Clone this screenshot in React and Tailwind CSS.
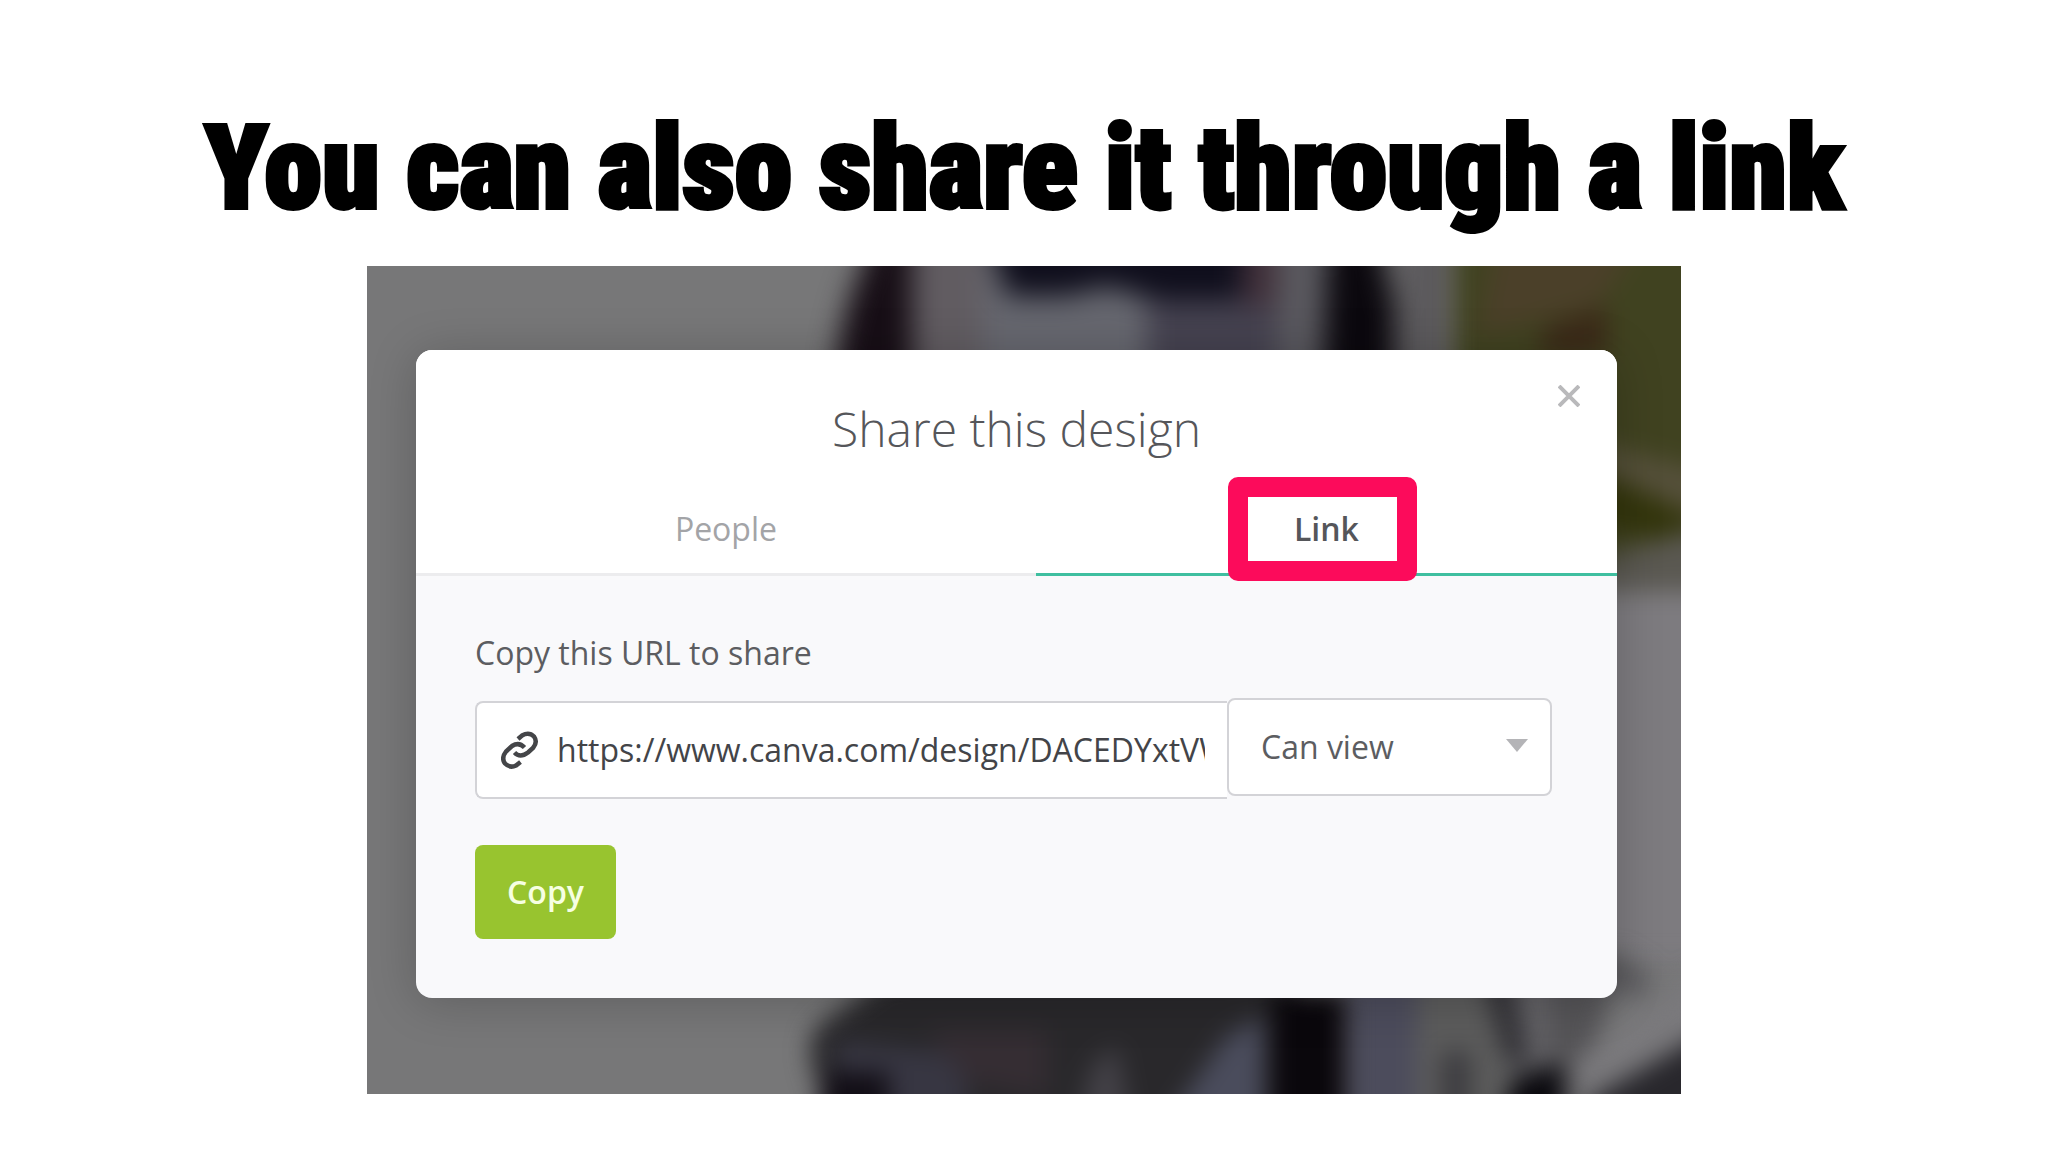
import { useRef, useState } from 'react';

const SHARE_URL = 'https://www.canva.com/design/DACEDYxtVW';

const TABS = [
  { id: 'people', label: 'People' },
  { id: 'link', label: 'Link' },
];

const PERMISSIONS = [
  { value: 'view', label: 'Can view' },
  { value: 'edit', label: 'Can edit' },
];

// Out of focus photo that sits behind the dialog
function Backdrop() {
  return (
    <svg
      className="absolute inset-0 h-full w-full"
      viewBox="0 0 1314 828"
      preserveAspectRatio="none"
      aria-hidden="true"
    >
      <defs>
        <filter id="soft" x="-30%" y="-30%" width="160%" height="160%" colorInterpolationFilters="sRGB">
          <feGaussianBlur stdDeviation="14" />
        </filter>
        <filter id="softer" x="-30%" y="-30%" width="160%" height="160%" colorInterpolationFilters="sRGB">
          <feGaussianBlur stdDeviation="12" />
        </filter>
      </defs>
      <rect width="1314" height="828" fill="#777778" />

      {/* top edge */}
      <g filter="url(#soft)">
        <path d="M500 -40H548V140H465Q470 50 500 -10Z" fill="#170e16" />
        <rect x="545" y="-40" width="75" height="180" fill="#615c61" />
        <rect x="615" y="-40" width="170" height="180" fill="#66676f" />
        <rect x="780" y="-40" width="130" height="180" fill="#454250" />
        <path d="M618 -40H875V34H790L740 20L700 30H640Z" fill="#0f0e1c" />
        <rect x="876" y="-40" width="40" height="80" fill="#41303a" />
        <rect x="910" y="-40" width="50" height="180" fill="#5a595f" />
        <path d="M962 -40H1010L1028 40V140H955Z" fill="#0b080e" />
        <rect x="1032" y="-40" width="54" height="180" fill="#5c5a5d" />
      </g>

      {/* foliage on the right */}
      <g filter="url(#softer)">
        <path d="M1086 -40H1380V318H1086Z" fill="#404220" />
        <path d="M1130 -30L1270 -20L1230 40L1110 70Z" fill="#4b4029" />
        <path d="M1180 60L1240 40V90H1170Z" fill="#3b2a18" />
        <path d="M1220 175L1340 205V255L1220 215Z" fill="#55503a" />
        <path d="M1220 200L1340 255V285L1220 255Z" fill="#33350c" />
        <path d="M1220 295L1340 260V350H1220Z" fill="#5a5851" />
        <rect x="1200" y="325" width="160" height="370" fill="#7d7b7f" />
      </g>

      {/* bottom edge */}
      <g filter="url(#softer)">
        <path d="M520 710H930V870H470L445 800Q438 765 462 752Z" fill="#29282b" />
        <path d="M470 775L600 790V850H470Z" fill="#373642" />
        <path d="M560 765H680V830L600 815Z" fill="#352d33" />
        <path d="M456 806H522V870H450Z" fill="#120e16" />
        <path d="M725 800L750 780L765 860H710Z" fill="#434147" />
        <path d="M860 770L897 750V870H790Z" fill="#4a4c5c" />
        <rect x="905" y="725" width="74" height="150" fill="#0a070c" />
        <rect x="982" y="700" width="68" height="180" fill="#4c4c5c" />
        <rect x="1050" y="700" width="90" height="180" fill="#5c5c5c" />
        <rect x="1074" y="785" width="30" height="90" fill="#3d3c40" />
        <path d="M1110 690H1142L1164 800H1140Z" fill="#323136" />
        <path d="M1150 690H1215L1200 820H1165Z" fill="#656468" />
        <path d="M1183 690H1260L1200 850H1180Z" fill="#555457" />
        <path d="M1144 812L1196 797V880H1135Z" fill="#09080d" />
        <path d="M1202 800L1340 700V780L1220 850Z" fill="#7a797c" />
        <path d="M1225 832L1350 760V890H1210Z" fill="#28272c" />
        <circle cx="1266" cy="715" r="16" fill="#5b5a5e" />
      </g>
    </svg>
  );
}

function ChainIcon() {
  return (
    <svg
      className="h-[38px] w-[38px] shrink-0"
      viewBox="0 0 38 38"
      fill="none"
      stroke="#444548"
      strokeWidth="4.5"
      aria-hidden="true"
    >
      <path d="M17 8L21 4.500Q28 0.500 33 5.500Q37 11 32 17L27 21.500Q19 27.500 13.500 21.500" />
      <path d="M23.500 16.500Q18 10.500 11 15L5 20.500Q0 27 4 32.500Q9 37.500 15 34.500L19.500 31" />
    </svg>
  );
}

export default function App() {
  const [tab, setTab] = useState('link');
  const [permission, setPermission] = useState('view');
  const [open, setOpen] = useState(true);
  const urlRef = useRef(null);

  const handleCopy = () => {
    urlRef.current?.select();
    navigator.clipboard?.writeText(SHARE_URL).catch(() => {});
  };

  return (
    <main className="flex min-h-screen flex-col items-center bg-white px-6 pt-[108px] pb-14 font-['Open_Sans',sans-serif]">
      <h1 className="mb-[38px] text-center font-['Roboto_Condensed',sans-serif] text-[116px] leading-[120px] font-black text-black [-webkit-text-stroke:4px_black]">
        You can also share it through a link
      </h1>

      <section className="relative w-full max-w-[1314px] overflow-hidden pt-[84px] pr-16 pb-24 pl-[49px]">
        <Backdrop />

        {open && (
          <div
            role="dialog"
            aria-labelledby="share-title"
            className="relative rounded-2xl bg-[#f9f9fb] shadow-[0_4px_48px_rgba(0,0,0,0.2)]"
          >
            {/* Header */}
            <div className="rounded-t-2xl bg-white pt-[47px]">
              <h2
                id="share-title"
                className="text-center text-[48px] leading-[64px] font-light text-[#55565a]"
              >
                Share this design
              </h2>
              <button
                type="button"
                aria-label="Close"
                onClick={() => setOpen(false)}
                className="absolute top-7 right-[30px] flex h-9 w-9 cursor-pointer items-center justify-center"
              >
                <svg className="h-[22px] w-[22px]" viewBox="0 0 22 22" stroke="#b9b9bb" strokeWidth="4" aria-hidden="true">
                  <path d="M1 1L21 21M21 1L1 21" />
                </svg>
              </button>

              <div role="tablist" className="mt-[19px] grid grid-cols-[16fr_15fr]">
                {TABS.map((t) => (
                  <button
                    key={t.id}
                    type="button"
                    role="tab"
                    aria-selected={tab === t.id}
                    onClick={() => setTab(t.id)}
                    className={`flex h-24 cursor-pointer items-center justify-center border-b-[3px] pt-1 text-[32px] leading-[48px] ${
                      tab === t.id
                        ? 'border-[#3fbfa0] font-semibold text-[#55565a]'
                        : 'border-[#ececee] text-[#a3a4a7]'
                    }`}
                  >
                    <span className="relative">
                      {t.label}
                      {t.id === 'link' && (
                        <span className="absolute -inset-y-7 -right-[58px] -left-[66px] rounded-[10px] border-[20px] border-[#fc0b5b]" />
                      )}
                    </span>
                  </button>
                ))}
              </div>
            </div>

            {/* Link form */}
            <div className="pt-[53px] pr-[65px] pb-[59px] pl-[59px]">
              <label htmlFor="share-url" className="block text-[32px] leading-[48px] text-[#5c5d61]">
                Copy this URL to share
              </label>

              <div className="mt-[21px] flex h-[101px]">
                <div className="flex h-[98px] flex-1 items-center gap-[18px] self-end rounded-l-lg border-2 border-r-0 border-[#d3d3d7] bg-white pr-[22px] pl-6">
                  <ChainIcon />
                  <input
                    id="share-url"
                    ref={urlRef}
                    type="text"
                    readOnly
                    value={SHARE_URL}
                    className="w-full min-w-0 bg-transparent text-[32px] leading-[48px] text-[#434448] outline-none"
                  />
                </div>
                <div className="relative h-[98px] w-[325px] shrink-0">
                  <select
                    aria-label="Permission"
                    value={permission}
                    onChange={(e) => setPermission(e.target.value)}
                    className="h-full w-full cursor-pointer appearance-none rounded-lg border-2 border-[#d3d3d7] bg-white pl-8 text-[32px] leading-[48px] text-[#5c5d61]"
                  >
                    {PERMISSIONS.map((p) => (
                      <option key={p.value} value={p.value}>
                        {p.label}
                      </option>
                    ))}
                  </select>
                  <svg
                    className="pointer-events-none absolute top-[41px] right-6 h-[13px] w-[22px]"
                    viewBox="0 0 22 13"
                    fill="#b4b4b7"
                    aria-hidden="true"
                  >
                    <path d="M0 0H22L11 13Z" />
                  </svg>
                </div>
              </div>

              <button
                type="button"
                onClick={handleCopy}
                className="mt-[46px] flex h-[94px] w-[141px] cursor-pointer items-center justify-center rounded-lg bg-[#98c42f] text-[32px] leading-[48px] font-semibold text-[#f6ffe2]"
              >
                Copy
              </button>
            </div>
          </div>
        )}
      </section>
    </main>
  );
}
